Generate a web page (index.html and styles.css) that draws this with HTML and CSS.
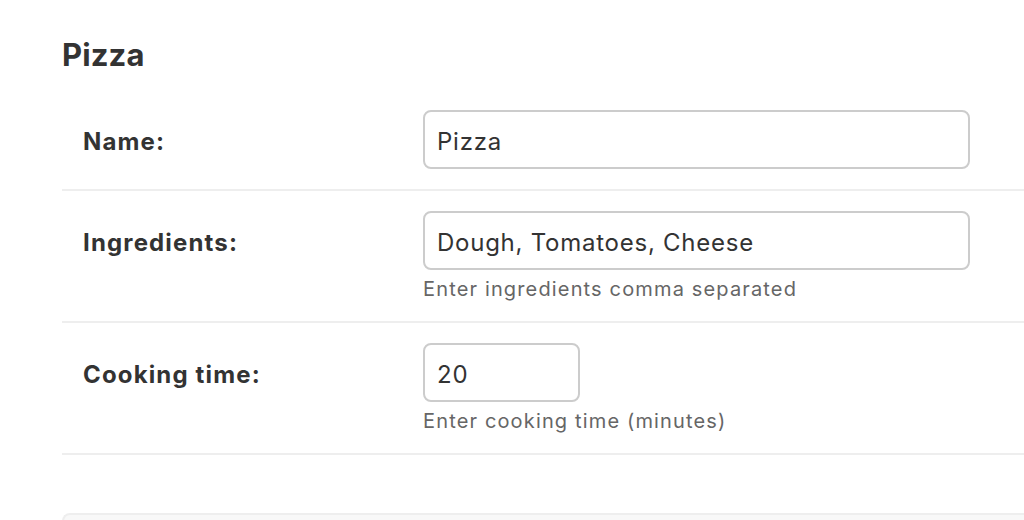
FILE: index.html
```html
<!DOCTYPE html>
<html lang="en">
<head>
<meta charset="utf-8">
<title>Pizza</title>
<link rel="stylesheet" href="styles.css">
</head>
<body>
<div class="content">
  <h2 class="title">Pizza</h2>
  <form class="form">
    <div class="row">
      <label class="label" for="name">Name:</label>
      <div class="field">
        <input class="input input-wide" id="name" type="text" value="Pizza">
      </div>
    </div>
    <div class="row">
      <label class="label" for="ingredients">Ingredients:</label>
      <div class="field">
        <input class="input input-wide" id="ingredients" type="text" value="Dough, Tomatoes, Cheese">
        <div class="help">Enter ingredients comma separated</div>
      </div>
    </div>
    <div class="row">
      <label class="label" for="time">Cooking time:</label>
      <div class="field">
        <input class="input input-narrow" id="time" type="text" value="20">
        <div class="help">Enter cooking time (minutes)</div>
      </div>
    </div>
    <div class="submit-row"></div>
  </form>
</div>
</body>
</html>
```

FILE: styles.css
```css
html, body {
  margin: 0;
  padding: 0;
  background: #ffffff;
}

body {
  font-family: Inter, "Noto Sans", "DejaVu Sans", sans-serif;
  color: #333333;
  overflow: hidden;
}

.content {
  padding-left: 62px;
}

.title {
  margin: 35px 0 15px 0;
  font-size: 31px;
  line-height: 40px;
  font-weight: 700;
  color: #333333;
  letter-spacing: 0.1px;
}

.form {
  display: flex;
  flex-direction: column;
}

.row {
  display: flex;
  padding: 20px 0;
  border-bottom: 2px solid #eeeeee;
}

.label {
  flex: 0 0 361px;
  padding-left: 21px;
  height: 59px;
  display: flex;
  align-items: center;
  padding-top: 4px;
  box-sizing: border-box;
  font-size: 24px;
  letter-spacing: 1.15px;
  font-weight: 700;
  color: #333333;
}

.field {
  display: flex;
  flex-direction: column;
}

.input {
  box-sizing: border-box;
  height: 59px;
  border: 2px solid #cccccc;
  border-radius: 8px;
  padding: 3px 12px 0 12px;
  font-family: Inter, "Noto Sans", "DejaVu Sans", sans-serif;
  font-size: 24px;
  letter-spacing: 0.75px;
  color: #333333;
  background: #ffffff;
  outline: none;
}

.input-wide {
  width: 547px;
}

.input-narrow {
  width: 157px;
}

.help {
  margin-top: 7px;
  font-size: 20px;
  letter-spacing: 1.15px;
  line-height: 24px;
  color: #666666;
}

.submit-row {
  margin-top: 58px;
  height: 60px;
  border: 2px solid #eeeeee;
  border-right: none;
  border-radius: 8px 0 0 0;
  background: #f8f8f8;
}
```
